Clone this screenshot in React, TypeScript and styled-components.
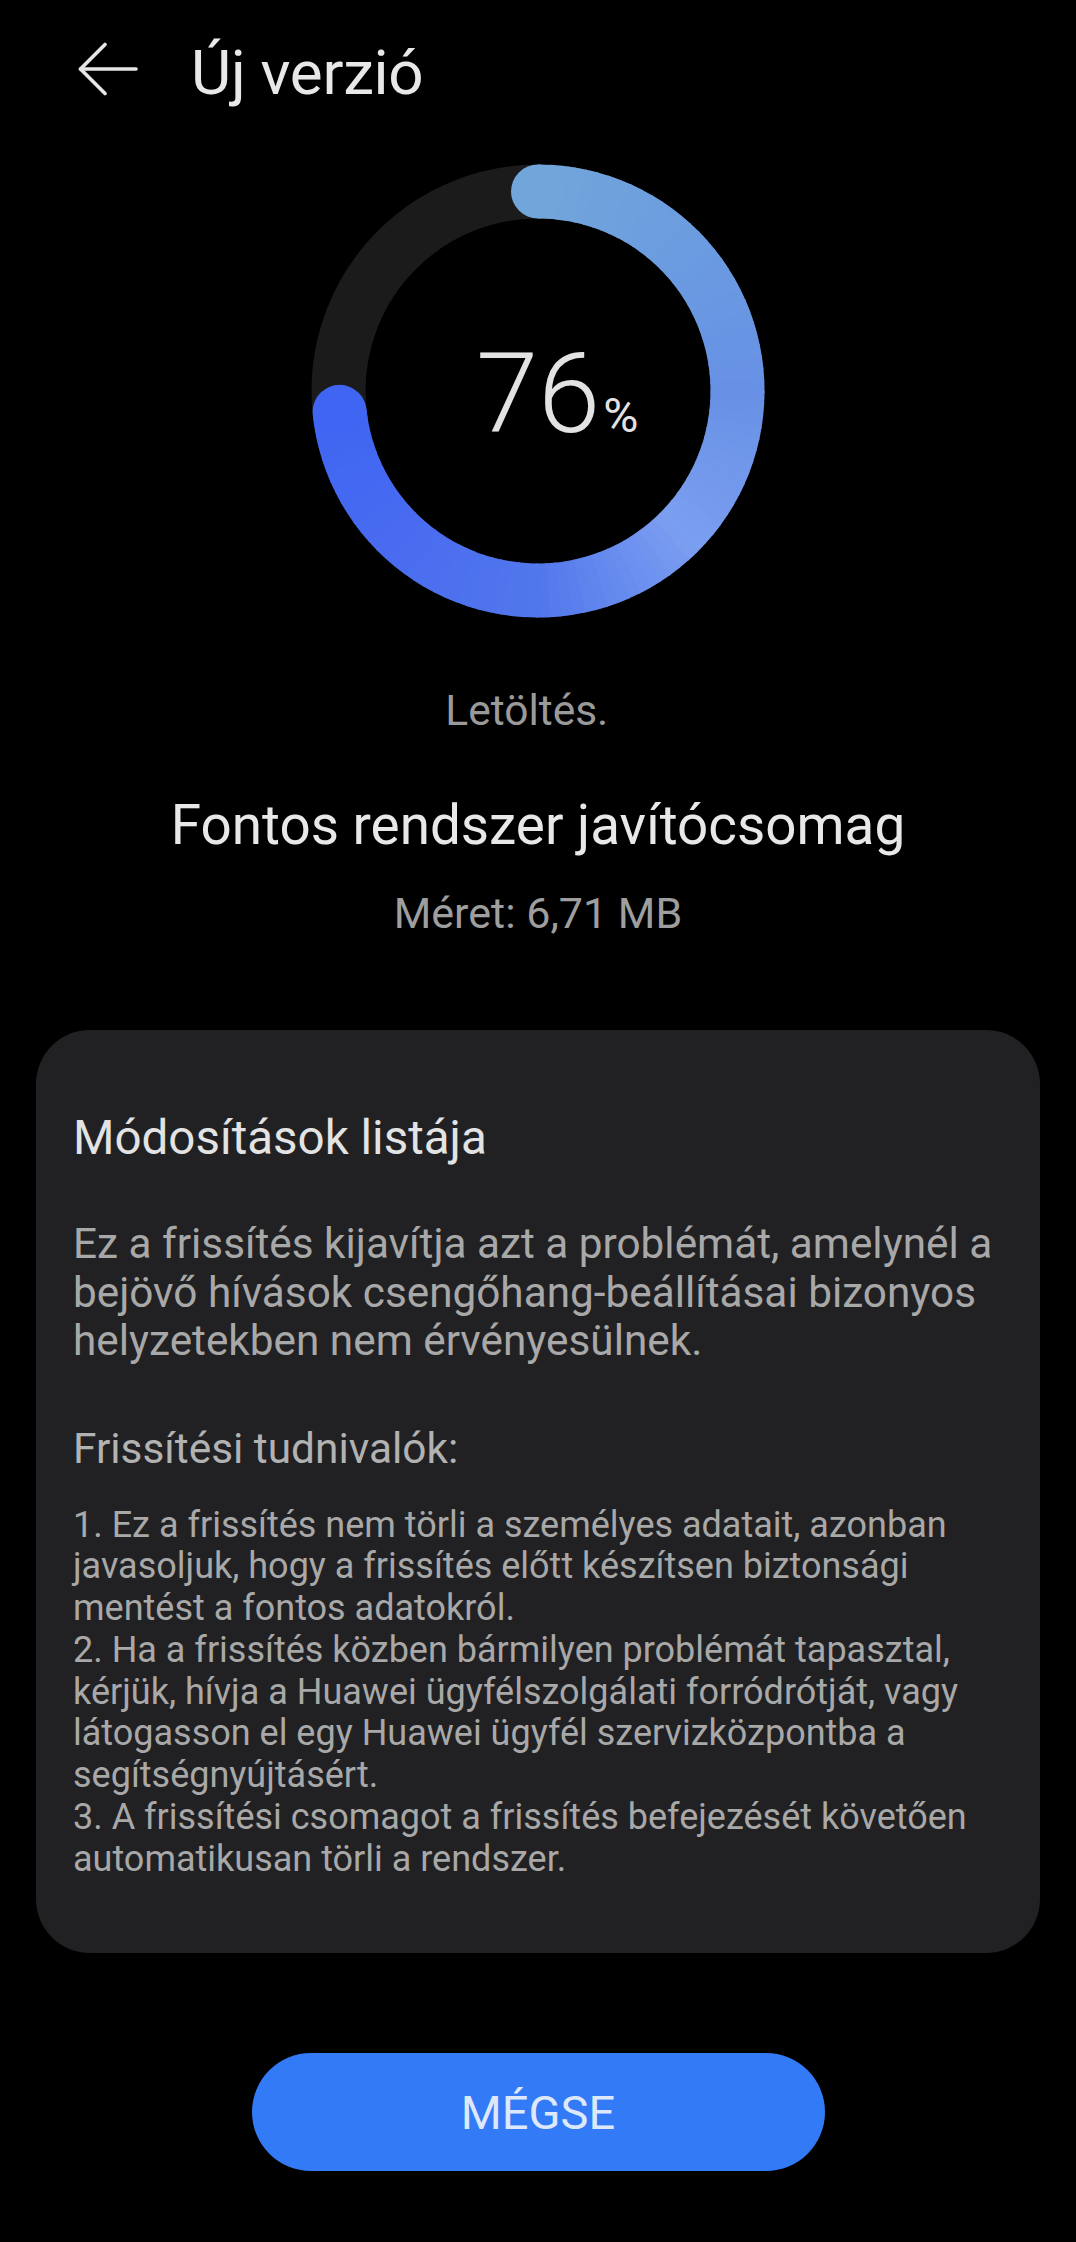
import React from 'react';
import styled, { createGlobalStyle } from 'styled-components';

const GlobalStyle = createGlobalStyle`
  html, body {
    margin: 0;
    padding: 0;
    background: #000;
  }
  body {
    font-family: Roboto, "Noto Sans", "Liberation Sans", sans-serif;
    -webkit-font-smoothing: antialiased;
  }
`;

const Page = styled.div`
  min-height: 2242px;
  background: #000;
  display: flex;
  flex-direction: column;
  align-items: center;
  font-family: Roboto, "Noto Sans", "Liberation Sans", sans-serif;
  font-weight: 400;
`;

const Header = styled.header`
  align-self: stretch;
  display: flex;
  align-items: flex-start;
  gap: 53px;
  padding: 39px 0 0 78px;
`;

const BackButton = styled.button`
  display: block;
  margin-top: 2px;
  padding: 0;
  border: none;
  background: transparent;
  cursor: pointer;
  width: 60px;
  height: 56px;
`;

const Title = styled.h1`
  margin: 0;
  font-size: 62px;
  line-height: 68px;
  font-weight: 400;
  color: #e8e8e8;
  letter-spacing: -0.3px;
`;

const Progress = styled.div`
  position: relative;
  width: 460px;
  height: 460px;
  margin-top: 54px;
`;

const ProgressLabel = styled.div`
  position: absolute;
  inset: 0;
  display: grid;
  grid-template-columns: 1fr auto 1fr;
  align-content: center;
  align-items: baseline;
  padding-top: 6px;
  color: #e2e2e2;
`;

const Digits = styled.span`
  grid-column: 2;
  font-size: 112px;
  line-height: 112px;
  font-weight: 300;
`;

const Percent = styled.span`
  grid-column: 3;
  justify-self: start;
  font-size: 48px;
  margin-left: 3px;
`;

const Status = styled.div<{ $gap: number; $size: number; $lh: number; $color: string }>`
  margin-top: ${(p) => p.$gap}px;
  font-size: ${(p) => p.$size}px;
  line-height: ${(p) => p.$lh}px;
  color: ${(p) => p.$color};
  text-align: center;
`;

const Dots = styled.span`
  visibility: hidden;
`;

const Card = styled.section`
  margin-top: 92px;
  width: 1004px;
  box-sizing: border-box;
  padding: 80px 37px 73px;
  border-radius: 54px;
  background: #212123;
`;

const CardTitle = styled.h2`
  margin: 0;
  font-size: 47.5px;
  line-height: 56px;
  font-weight: 400;
  color: #e3e3e3;
`;

const Text = styled.p<{ $gap: number; $size: number; $lh: number; $color: string }>`
  margin: ${(p) => p.$gap}px 0 0;
  font-size: ${(p) => p.$size}px;
  line-height: ${(p) => p.$lh}px;
  color: ${(p) => p.$color};
  white-space: nowrap;
`;

const CancelButton = styled.button`
  margin-top: 100px;
  width: 573px;
  height: 118px;
  border: none;
  border-radius: 59px;
  background: #337af6;
  color: #dde8fb;
  font-family: inherit;
  font-size: 47px;
  font-weight: 400;
  cursor: pointer;
`;

const SIZE = 460;
const C = SIZE / 2;
const R = 199.5;
const STROKE = 54;
const END = 264;

const colorStops: [number, number[]][] = [
  [0, [0x72, 0xa6, 0xda]],
  [45, [0x6b, 0x9c, 0xe0]],
  [90, [0x67, 0x91, 0xe5]],
  [135, [0x7b, 0x9e, 0xf0]],
  [180, [0x51, 0x77, 0xec]],
  [225, [0x48, 0x6b, 0xf0]],
  [264, [0x3f, 0x65, 0xf2]],
];

const colorAt = (a: number) => {
  for (let i = 0; i < colorStops.length - 1; i++) {
    const [a0, c0] = colorStops[i];
    const [a1, c1] = colorStops[i + 1];
    if (a <= a1) {
      const t = (a - a0) / (a1 - a0);
      const c = c0.map((v, k) => Math.round(v + (c1[k] - v) * t));
      return `rgb(${c[0]},${c[1]},${c[2]})`;
    }
  }
  const last = colorStops[colorStops.length - 1][1];
  return `rgb(${last[0]},${last[1]},${last[2]})`;
};

const point = (deg: number) => {
  const rad = (deg * Math.PI) / 180;
  return [C + R * Math.sin(rad), C - R * Math.cos(rad)];
};

const Ring = () => {
  const step = 3;
  const segments = [];
  for (let a = 0; a < END; a += step) {
    const b = Math.min(a + step + 0.6, END);
    const [x0, y0] = point(a);
    const [x1, y1] = point(b);
    segments.push(
      <path
        key={a}
        d={`M${x0} ${y0} A${R} ${R} 0 0 1 ${x1} ${y1}`}
        fill="none"
        stroke={colorAt(a + step / 2)}
        strokeWidth={STROKE}
      />
    );
  }
  const [sx, sy] = point(0);
  const [ex, ey] = point(END);
  return (
    <svg width={SIZE} height={SIZE} viewBox={`0 0 ${SIZE} ${SIZE}`}>
      <circle cx={C} cy={C} r={R} fill="none" stroke="#1b1b1b" strokeWidth={STROKE} />
      {segments}
      <circle cx={sx} cy={sy} r={STROKE / 2} fill={colorAt(0)} />
      <circle cx={ex} cy={ey} r={STROKE / 2} fill={colorAt(END)} />
    </svg>
  );
};

const App = () => {
  return (
    <Page>
      <GlobalStyle />
      <Header>
        <BackButton aria-label="Vissza">
          <svg width="60" height="56" viewBox="0 0 60 56" fill="none" stroke="#e6e6e6" strokeWidth="3.6" strokeLinecap="round" strokeLinejoin="round">
            <path d="M2.5 28H58" />
            <path d="M27 3.5L2.5 28L27 52.5" />
          </svg>
        </BackButton>
        <Title>Új verzió</Title>
      </Header>

      <Progress>
        <Ring />
        <ProgressLabel>
          <Digits>76</Digits>
          <Percent>%</Percent>
        </ProgressLabel>
      </Progress>

      <Status $gap={65} $size={42.5} $lh={50} $color="#9a9a9a">
        Letöltés.<Dots>..</Dots>
      </Status>
      <Status $gap={57} $size={54.8} $lh={64} $color="#e8e8e8">Fontos rendszer javítócsomag</Status>
      <Status $gap={31} $size={43} $lh={50} $color="#9e9e9e">Méret: 6,71 MB</Status>

      <Card>
        <CardTitle>Módosítások listája</CardTitle>
        <Text $gap={54} $size={42.3} $lh={48.5} $color="#a8a8a8">
          Ez a frissítés kijavítja azt a problémát, amelynél a<br />
          bejövő hívások csengőhang-beállításai bizonyos<br />
          helyzetekben nem érvényesülnek.
        </Text>
        <Text $gap={58} $size={42.4} $lh={50} $color="#b2b2b2">Frissítési tudnivalók:</Text>
        <Text $gap={31} $size={36} $lh={41.75} $color="#a8a8a8">
          1. Ez a frissítés nem törli a személyes adatait, azonban<br />
          javasoljuk, hogy a frissítés előtt készítsen biztonsági<br />
          mentést a fontos adatokról.<br />
          2. Ha a frissítés közben bármilyen problémát tapasztal,<br />
          kérjük, hívja a Huawei ügyfélszolgálati forródrótját, vagy<br />
          látogasson el egy Huawei ügyfél szervizközpontba a<br />
          segítségnyújtásért.<br />
          3. A frissítési csomagot a frissítés befejezését követően<br />
          automatikusan törli a rendszer.
        </Text>
      </Card>

      <CancelButton>MÉGSE</CancelButton>
    </Page>
  );
};

export default App;
